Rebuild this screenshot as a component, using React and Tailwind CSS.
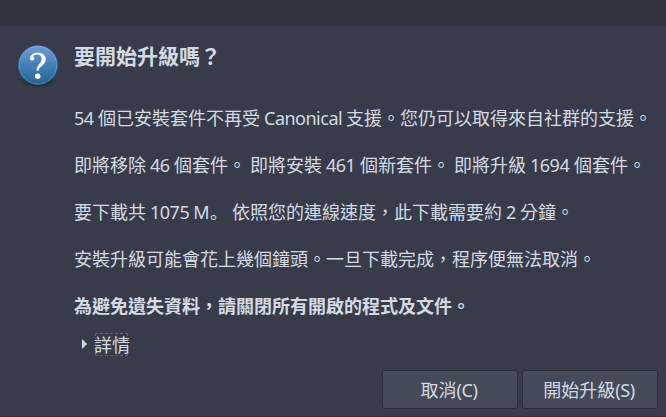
const Latin = ({ children, className = '' }) => (
  <span className={`inline-block whitespace-pre tracking-[-0.5px] ${className}`}>{children}</span>
);

const Line = ({ children, className = '' }) => (
  <p className={`h-[47px] whitespace-nowrap leading-[47px] ${className}`}>{children}</p>
);

const Button = ({ children }) => (
  <button className="h-[39px] w-[136px] rounded-[3px] border border-[#2b2e39] bg-[#444a58] pr-[2px] pt-px text-[18px] text-[#d3dae3]">
    {children}
  </button>
);

function QuestionIcon() {
  return (
    <svg width="44" height="46" viewBox="0 0 44 46" className="shrink-0">
      <defs>
        <linearGradient id="ball" x1="0" y1="0" x2="0" y2="1">
          <stop offset="0" stopColor="#719bd5" />
          <stop offset="0.5" stopColor="#4380b8" />
          <stop offset="1" stopColor="#27668f" />
        </linearGradient>
        <linearGradient id="rim" x1="0" y1="0" x2="0" y2="1">
          <stop offset="0" stopColor="#83afe6" />
          <stop offset="1" stopColor="#347bab" />
        </linearGradient>
        <radialGradient id="shade">
          <stop offset="0.65" stopColor="#20222c" stopOpacity="0.55" />
          <stop offset="1" stopColor="#20222c" stopOpacity="0" />
        </radialGradient>
      </defs>
      <ellipse cx="22" cy="38" rx="19" ry="7" fill="url(#shade)" />
      <circle cx="22" cy="22" r="19.8" fill="#2b6da1" />
      <circle cx="22" cy="22" r="18.8" fill="url(#ball)" stroke="url(#rim)" strokeWidth="1" />
      <path
        d="M14 15.4C14.5 11.8 17.6 9.8 21.8 9.8c4.9 0 8 2.5 8 6.400 0 2.8-1.5 4.600-3.700 6.500-2.300 1.900-3.400 2.900-3.600 5h-1.900c0-3 .8-4.600 2.500-6.500 1.700-1.900 2.500-3 2.500-5.100 0-2.900-1.600-4.500-4.300-4.500-2 0-3.600.8-4.300 2.100.9.5 1.300 1.100 1.300 1.900 0 1.200-.8 2-2 2-1.400 0-2.300-.8-2.300-1.800z"
        fill="#fff"
      />
      <circle cx="21.7" cy="33.3" r="2.7" fill="#fff" />
    </svg>
  );
}

export default function App() {
  return (
    <div
      lang="zh-Hant"
      className="flex h-[417px] w-[666px] flex-col overflow-hidden bg-[#383c4a] font-['Noto_Sans','Noto_Sans_CJK_TC',sans-serif] text-[18px] text-[#d3dae3]"
    >
      <header className="h-[26px] shrink-0 bg-[#2f343f]" />
      <main className="flex h-[344px] shrink-0 pl-4 pt-[17px]">
        <QuestionIcon />
        <div className="pl-[14px]">
          <h1 className="h-[52px] whitespace-nowrap text-[21px] font-bold leading-[26px]">要開始升級嗎？</h1>
          <div>
            <Line>
              <Latin className="w-6">54 </Latin>個已安裝套件不再受<Latin className="w-[86px] pl-1">Canonical</Latin>
              支援。您仍可以取得來自社群的支援。
            </Line>
            <Line>
              即將移除<Latin className="w-7 pl-1">46</Latin>個套件。<Latin className="w-1"> </Latin>即將安裝
              <Latin className="w-[38px] pl-1">461</Latin>個新套件。<Latin className="w-1"> </Latin>即將升級
              <Latin className="w-12 pl-1">1694</Latin>個套件。
            </Line>
            <Line>
              要下載共<Latin className="w-16 pl-1">1075 M</Latin>
              <span lang="zh-Hans" className="font-['Noto_Sans_CJK_SC',sans-serif] leading-none">。</span>
              <Latin className="w-1"> </Latin>依照您的連線速度，此下載需要約<Latin className="w-[18px] pl-1">2</Latin>分鐘。
            </Line>
            <Line>安裝升級可能會花上幾個鐘頭。一旦下載完成，程序便無法取消。</Line>
            <Line className="font-bold">為避免遺失資料，請關閉所有開啟的程式及文件。</Line>
          </div>
          <div className="-mt-[3px] flex h-[34px] items-center pl-2">
            <svg width="5" height="10" viewBox="0 0 5 10" className="mr-2">
              <path d="M0 0L5 5L0 10Z" fill="#d3dae3" />
            </svg>
            <span className="h-[23px] w-[33px] whitespace-nowrap border border-dashed border-[#5d6371] leading-[22px]">
              <span className="-ml-[2px]">詳情</span>
            </span>
          </div>
        </div>
      </main>
      <footer className="flex h-[46px] shrink-0 justify-end gap-1 pr-2">
        <Button>取消<span className="tracking-[-0.4px]">(C)</span></Button>
        <Button>開始升級<span className="tracking-[-0.4px]">(S)</span></Button>
      </footer>
      <div className="h-px shrink-0 bg-[#30313d]" />
    </div>
  );
}
